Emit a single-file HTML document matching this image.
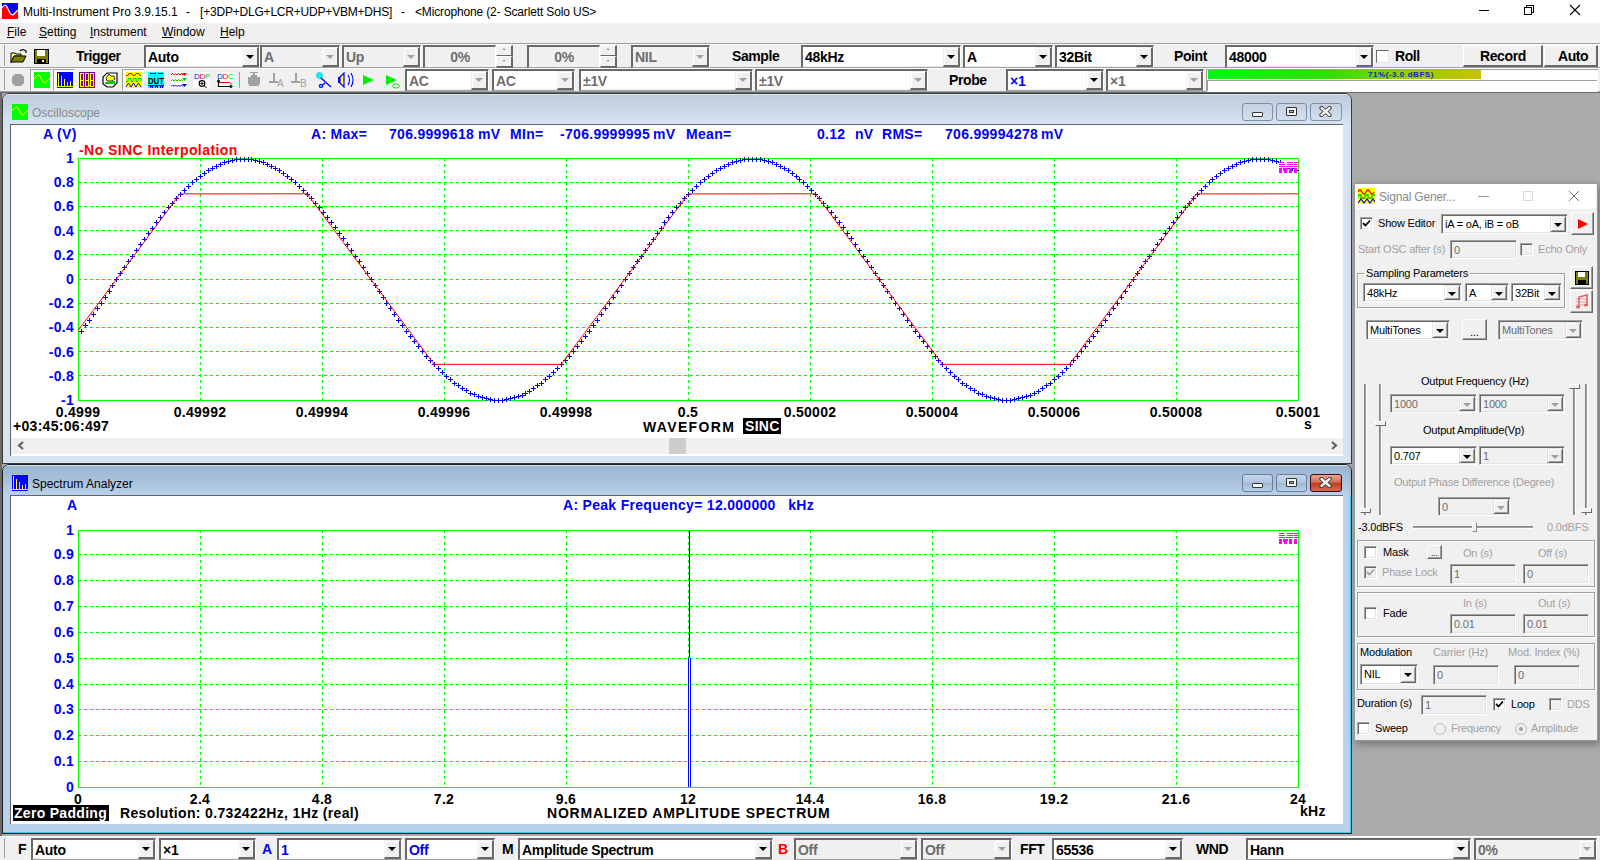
<!DOCTYPE html><html><head><meta charset="utf-8"><style>
*{margin:0;padding:0;box-sizing:border-box}
html,body{width:1600px;height:860px;overflow:hidden;background:#f0f0f0;font-family:"Liberation Sans",sans-serif;}
.a{position:absolute}
.t{position:absolute;white-space:nowrap;line-height:1}
.cb{position:absolute;background:#fff;border-top:2px solid #696969;border-left:2px solid #696969;border-right:1px solid #fff;border-bottom:1px solid #a0a0a0;box-shadow:inset -1px -1px 0 #f0f0f0}
.cb.dis{background:#f0f0f0}
.cb .v{position:absolute;left:2px;top:0;bottom:0;display:flex;align-items:center;font-weight:bold;font-size:14px;color:#000;white-space:nowrap;letter-spacing:-0.3px}
.cb.dis .v{color:#6d6d6d}
.cb .btn{position:absolute;right:0;top:0;bottom:0;width:17px;background:#f0f0f0;border-top:1px solid #f0f0f0;border-left:1px solid #f0f0f0;border-right:2px solid #696969;border-bottom:2px solid #696969;box-shadow:inset 1px 1px 0 #fff}
.cb .btn:after{content:"";position:absolute;left:50%;top:50%;margin-left:-4px;margin-top:-2px;border-left:4px solid transparent;border-right:4px solid transparent;border-top:4px solid #000}
.cb.dis .btn:after,.cb .btn.g:after{border-top-color:#a0a0a0}
.lbl{position:absolute;font-weight:bold;font-size:14px;color:#000;white-space:nowrap;line-height:1;letter-spacing:-0.4px}
.btn3d{position:absolute;background:#f0f0f0;border-top:1px solid #fff;border-left:1px solid #fff;border-right:2px solid #696969;border-bottom:2px solid #696969;}
</style></head><body>
<div class="a" style="left:0;top:0;width:1600px;height:23px;background:#fff"></div>
<svg class="a" style="left:2px;top:3px" width="16" height="16" viewBox="0 0 16 16"><rect width="16" height="16" fill="#00f"/><path d="M0 16 L0 4.5 L4 3 L8.5 11 L11 12 L16 7 L16 16Z" fill="#f00"/><path d="M0 5 Q3 0 5 4 L8 10 Q10 13 12 11 L16 7" fill="none" stroke="#fff" stroke-width="1.2"/></svg>
<div class="t" style="left:23px;top:6px;font-size:12px;color:#000">Multi-Instrument Pro 3.9.15.1</div>
<div class="t" style="left:186px;top:6px;font-size:12px;color:#000">-</div>
<div class="t" style="left:200px;top:6px;font-size:12px;color:#000;letter-spacing:-0.2px">[+3DP+DLG+LCR+UDP+VBM+DHS]</div>
<div class="t" style="left:401px;top:6px;font-size:12px;color:#000">-</div>
<div class="t" style="left:415px;top:6px;font-size:12px;color:#000;letter-spacing:-0.15px">&lt;Microphone (2- Scarlett Solo US&gt;</div>
<div class="a" style="left:1479px;top:10px;width:10px;height:1px;background:#000"></div>
<svg class="a" style="left:1524px;top:5px" width="11" height="10" shape-rendering="crispEdges"><path d="M2.5 2.5V0.5H9.5V7.5H7.5" fill="none" stroke="#000"/><rect x="0.5" y="2.5" width="7" height="7" fill="#fff" stroke="#000"/></svg>
<svg class="a" style="left:1569px;top:4px" width="12" height="12"><path d="M1 1L11 11M11 1L1 11" stroke="#000" stroke-width="1.1"/></svg>
<div class="a" style="left:0;top:23px;width:1600px;height:20px;background:#f0f0f0"></div>
<div class="t" style="left:7px;top:26px;font-size:12px;color:#000"><u>F</u>ile</div>
<div class="t" style="left:39px;top:26px;font-size:12px;color:#000"><u>S</u>etting</div>
<div class="t" style="left:90px;top:26px;font-size:12px;color:#000"><u>I</u>nstrument</div>
<div class="t" style="left:162px;top:26px;font-size:12px;color:#000"><u>W</u>indow</div>
<div class="t" style="left:220px;top:26px;font-size:12px;color:#000"><u>H</u>elp</div>
<div class="a" style="left:0;top:43px;width:1600px;height:1px;background:#a0a0a0"></div>
<div class="a" style="left:0;top:44px;width:1600px;height:1px;background:#fff"></div>
<div class="a" style="left:0;top:45px;width:1600px;height:23px;background:#f0f0f0"></div>
<div class="a" style="left:0;top:67px;width:1600px;height:1px;background:#a0a0a0"></div>
<div class="a" style="left:0;top:68px;width:1600px;height:1px;background:#fff"></div>
<div class="a" style="left:0;top:69px;width:1600px;height:22px;background:#f0f0f0"></div>
<div class="a" style="left:0;top:91px;width:1600px;height:1px;background:#a0a0a0"></div>
<div class="a" style="left:4px;top:45px;width:1px;height:21px;background:#a0a0a0"></div>
<div class="a" style="left:4px;top:69px;width:1px;height:21px;background:#a0a0a0"></div>
<svg class="a" style="left:10px;top:48px" width="18" height="16" viewBox="0 0 18 16"><path d="M1 5h4l1 1h5v2H4l-3 7z" fill="#ffff80" stroke="#000" stroke-width="1"/><path d="M1 14l3-6h12l-3 6z" fill="#808000" stroke="#000" stroke-width="1"/><path d="M10 3q3-3 6 0l0 2" fill="none" stroke="#000" stroke-width="1.2"/></svg>
<svg class="a" style="left:34px;top:49px" width="15" height="15" viewBox="0 0 15 15"><rect x="0.5" y="0.5" width="14" height="14" fill="#808000" stroke="#000"/><rect x="3" y="1" width="8" height="6" fill="#fff"/><rect x="3" y="10" width="9" height="4" fill="#000"/><rect x="8" y="11" width="2" height="2" fill="#fff"/></svg>
<div class="lbl" style="left:76px;top:49px">Trigger</div>
<div class="cb" style="left:144px;top:45px;width:116px;height:23px;"><div class="v" style="font-size:14px">Auto</div><div class="btn"></div></div>
<div class="cb dis" style="left:260px;top:45px;width:80px;height:23px;"><div class="v" style="font-size:14px">A</div><div class="btn"></div></div>
<div class="cb dis" style="left:342px;top:45px;width:79px;height:23px;"><div class="v" style="font-size:14px">Up</div><div class="btn"></div></div>
<div class="cb dis" style="left:423px;top:45px;width:73px;height:23px"><div class="v" style="left:0;right:0;justify-content:center">0%</div></div>
<div class="a" style="left:496px;top:45px;width:17px;height:11px;background:#f0f0f0;border-right:2px solid #696969;border-bottom:1px solid #696969;border-top:1px solid #fff;border-left:1px solid #fff"></div>
<div class="a" style="left:496px;top:56px;width:17px;height:12px;background:#f0f0f0;border-right:2px solid #696969;border-bottom:2px solid #696969;border-top:1px solid #fff;border-left:1px solid #fff"></div>
<div class="a" style="left:502px;top:48px;border-left:2px solid transparent;border-right:2px solid transparent;border-bottom:2px solid #a0a0a0"></div>
<div class="a" style="left:502px;top:60px;border-left:2px solid transparent;border-right:2px solid transparent;border-top:2px solid #a0a0a0"></div>
<div class="cb dis" style="left:527px;top:45px;width:73px;height:23px"><div class="v" style="left:0;right:0;justify-content:center">0%</div></div>
<div class="a" style="left:600px;top:45px;width:17px;height:11px;background:#f0f0f0;border-right:2px solid #696969;border-bottom:1px solid #696969;border-top:1px solid #fff;border-left:1px solid #fff"></div>
<div class="a" style="left:600px;top:56px;width:17px;height:12px;background:#f0f0f0;border-right:2px solid #696969;border-bottom:2px solid #696969;border-top:1px solid #fff;border-left:1px solid #fff"></div>
<div class="a" style="left:606px;top:48px;border-left:2px solid transparent;border-right:2px solid transparent;border-bottom:2px solid #a0a0a0"></div>
<div class="a" style="left:606px;top:60px;border-left:2px solid transparent;border-right:2px solid transparent;border-top:2px solid #a0a0a0"></div>
<div class="cb dis" style="left:631px;top:45px;width:79px;height:23px;"><div class="v" style="font-size:14px">NIL</div><div class="btn"></div></div>
<div class="lbl" style="left:732px;top:49px">Sample</div>
<div class="cb" style="left:801px;top:45px;width:160px;height:23px;"><div class="v" style="font-size:14px">48kHz</div><div class="btn"></div></div>
<div class="cb" style="left:963px;top:45px;width:90px;height:23px;"><div class="v" style="font-size:14px">A</div><div class="btn"></div></div>
<div class="cb" style="left:1055px;top:45px;width:99px;height:23px;"><div class="v" style="font-size:14px">32Bit</div><div class="btn"></div></div>
<div class="lbl" style="left:1174px;top:49px">Point</div>
<div class="cb" style="left:1225px;top:45px;width:149px;height:23px;"><div class="v" style="font-size:14px">48000</div><div class="btn"></div></div>
<div class="a" style="left:1376px;top:50px;width:13px;height:13px;background:#fff;border-top:1px solid #696969;border-left:1px solid #696969;border-right:1px solid #e3e3e3;border-bottom:1px solid #e3e3e3"></div>
<div class="lbl" style="left:1395px;top:49px">Roll</div>
<div class="btn3d" style="left:1463px;top:45px;width:80px;height:22px"></div>
<div class="lbl" style="left:1480px;top:49px">Record</div>
<div class="btn3d" style="left:1544px;top:45px;width:54px;height:22px"></div>
<div class="lbl" style="left:1558px;top:49px">Auto</div>

<svg class="a" style="left:11px;top:73px" width="14" height="14"><path d="M4 1h6l3 3v6l-3 3H4l-3-3V4z" fill="#a0a0a0"/></svg>
<div class="a" style="left:30px;top:69px;width:22px;height:22px;border-top:1px solid #a0a0a0;border-left:1px solid #a0a0a0;border-right:1px solid #fff;border-bottom:1px solid #fff;background:#f8f8f8"></div>
<svg class="a" style="left:34px;top:72px" width="16" height="16"><rect width="16" height="16" fill="#0f0"/><path d="M0 7 L4 3 L5 3 L10 11 L11 11 L16 6" fill="none" stroke="#ff0" stroke-width="1"/></svg>
<div class="a" style="left:53px;top:69px;width:22px;height:22px;border-top:1px solid #a0a0a0;border-left:1px solid #a0a0a0;border-right:1px solid #fff;border-bottom:1px solid #fff;background:#f8f8f8"></div>
<svg class="a" style="left:57px;top:72px" width="16" height="16" shape-rendering="crispEdges"><rect width="16" height="16" fill="#00f"/><path d="M1.5 1v14M4.5 4v11M7.5 7v8M10.5 10v5M13.5 9v6M0 14.5h16" stroke="#ff0" stroke-width="1"/></svg>
<svg class="a" style="left:79px;top:72px" width="16" height="16" shape-rendering="crispEdges"><rect width="16" height="16" fill="#800080"/><path d="M1.5 1.5h3v13h-3zM1.5 8h3M6.5 1.5h3v13h-3zM6.5 8h3M11.5 1.5h3v13h-3zM11.5 8h3" fill="none" stroke="#ff0" stroke-width="1"/><rect x="10" y="13" width="1" height="1" fill="#ff0"/></svg>
<svg class="a" style="left:102px;top:72px" width="16" height="16"><rect width="16" height="16" fill="#fff"/><path d="M1 12V5l4-4h10v10l-4 4H5z" fill="#fff" stroke="#000" stroke-width="1.2"/><path d="M4 6l3-4 2 2 3 0 1 3-3 2H5z" fill="#ff0" stroke="#000" stroke-width=".8"/><path d="M3 10h4l2-1h4v3H3z" fill="#0c0"/></svg>
<div class="a" style="left:122px;top:69px;width:22px;height:22px;border-top:1px solid #a0a0a0;border-left:1px solid #a0a0a0;border-right:1px solid #fff;border-bottom:1px solid #fff;background:#f8f8f8"></div>
<svg class="a" style="left:126px;top:72px" width="16" height="16"><rect width="16" height="16" fill="#ff0"/><path d="M0 3.5h2l1-2h3l1 2h2l1-2h3l1 2h1" fill="none" stroke="#f00"/><path d="M0 9.5h2v-3h3v3h2v-3h3v3h2v-3h3v3" fill="none" stroke="#0c0"/><path d="M0 15l2.5-4 2.5 4 2.5-4 2.5 4 2.5-4 2.5 4" fill="none" stroke="#00f"/></svg>
<svg class="a" style="left:148px;top:72px" width="16" height="16" shape-rendering="crispEdges"><rect width="16" height="16" fill="#0ff"/><text x="0" y="12" font-family="Liberation Sans" font-weight="bold" font-size="9" fill="#000" textLength="16" lengthAdjust="spacingAndGlyphs">DUT</text><path d="M2 1.5h6M10 1.5h5M0 13.5h16" stroke="#00f"/><path d="M2 14h2v2H2zM7 14h2v2H7zM12 14h2v2h-2z" fill="none" stroke="#00f"/></svg>
<svg class="a" style="left:171px;top:72px" width="16" height="16"><rect width="16" height="16" fill="#fff"/><path d="M0 3l1.5 -1.5 1.5 1.5 1.5-1.5 1.5 1.5 1.5-1.5 1.5 1.5 1.5-1.5 1.5 1.5" fill="none" stroke="#f00"/><path d="M11 1h5l-2.5 3z" fill="#f00"/><path d="M0 9l1.5 -1.5 1.5 1.5 1.5-1.5 1.5 1.5 1.5-1.5 1.5 1.5 1.5-1.5 1.5 1.5" fill="none" stroke="#0c0"/><path d="M11 6h5l-2.5 3z" fill="#0c0"/><path d="M0 14.5l1.5 -1.5 1.5 1.5 1.5-1.5 1.5 1.5 1.5-1.5 1.5 1.5 1.5-1.5 1.5 1.5" fill="none" stroke="#00f"/><path d="M11 12h5l-2.5 3z" fill="#00f"/></svg>
<svg class="a" style="left:194px;top:72px" width="16" height="16"><rect width="16" height="16" fill="#fff"/><text x="0" y="7" font-family="Liberation Sans" font-size="8" fill="#00f">D</text><text x="5.5" y="7" font-family="Liberation Sans" font-size="8" fill="#f00">D</text><text x="11" y="7" font-family="Liberation Sans" font-size="8" fill="#0c0">P</text><circle cx="8" cy="11.5" r="2.8" fill="none" stroke="#000" stroke-width="1.2"/><path d="M10 13.5l2.5 2.5M6.5 11.5h3M8 10v3" stroke="#000"/></svg>
<svg class="a" style="left:217px;top:72px" width="16" height="16"><rect width="16" height="16" fill="#fff"/><text x="0" y="7" font-family="Liberation Sans" font-size="8" fill="#00f">D</text><text x="5.5" y="7" font-family="Liberation Sans" font-size="8" fill="#f00">D</text><text x="11" y="7" font-family="Liberation Sans" font-size="8" fill="#0c0">C</text><path d="M2 10.5h11l2 2" fill="none" stroke="#f00"/><path d="M1.5 9v5.5h13M0 10l1.5-2 1.5 2M13 13l2 1.5-2 1.5" fill="none" stroke="#000" stroke-width="1.2"/></svg>
<div class="a" style="left:239px;top:72px;width:1px;height:16px;background:#a0a0a0"></div>
<svg class="a" style="left:247px;top:72px" width="14" height="16" shape-rendering="crispEdges"><path d="M3 0h8v1H3zM6 1h2v2H6zM4 3h6v2H4zM1 5h12v7H1zM2 12h10v2H2z" fill="#a0a0a0"/></svg>
<svg class="a" style="left:269px;top:73px" width="17" height="15" shape-rendering="crispEdges"><path d="M4 0h2v8H4zM0 8h9v2H0z" fill="#a0a0a0"/><text x="8" y="14" font-family="Liberation Sans" font-size="10" fill="#a0a0a0">A</text></svg>
<svg class="a" style="left:291px;top:73px" width="17" height="15" shape-rendering="crispEdges"><path d="M4 0h2v8H4zM0 8h9v2H0z" fill="#a0a0a0"/><text x="9" y="14" font-family="Liberation Sans" font-size="10" fill="#a0a0a0">B</text></svg>
<svg class="a" style="left:316px;top:72px" width="16" height="16"><circle cx="3.5" cy="3.5" r="3" fill="#0ff" stroke="#0aa" stroke-width=".6"/><path d="M5 6l10 9M5 14l4-3" stroke="#00f" stroke-width="1.3" fill="none"/><circle cx="5" cy="14" r="1.8" fill="#0cf" stroke="#00f"/></svg>
<svg class="a" style="left:338px;top:72px" width="17" height="16"><rect x="0" y="5" width="2" height="6" fill="#00f"/><path d="M2 5l4-4v14l-4-4z" fill="#ff0" stroke="#00f" stroke-width="1.2"/><path d="M10 3q3 5 0 10M13 1q4 7 0 14" fill="none" stroke="#00f" stroke-width="1.1"/></svg>
<svg class="a" style="left:363px;top:75px" width="12" height="10"><path d="M0 0l11 5-11 5z" fill="#0e0"/></svg>
<svg class="a" style="left:386px;top:75px" width="15" height="14"><path d="M0 0l11 5-11 5z" fill="#0e0"/><ellipse cx="10" cy="11" rx="3.5" ry="2" fill="none" stroke="#0e0"/></svg>

<div class="cb" style="left:405px;top:69px;width:84px;height:22px;background:#fff;"><div class="v" style="color:#6d6d6d;font-size:14px">AC</div><div class="btn g"></div></div>
<div class="cb" style="left:492px;top:69px;width:83px;height:22px;background:#fff;"><div class="v" style="color:#6d6d6d;font-size:14px">AC</div><div class="btn g"></div></div>
<div class="cb" style="left:579px;top:69px;width:174px;height:22px;background:#fff;"><div class="v" style="color:#6d6d6d;font-size:14px">&plusmn;1V</div><div class="btn g"></div></div>
<div class="cb" style="left:755px;top:69px;width:173px;height:22px;background:#fff;"><div class="v" style="color:#6d6d6d;font-size:14px">&plusmn;1V</div><div class="btn g"></div></div>
<div class="lbl" style="left:949px;top:73px">Probe</div>
<div class="cb" style="left:1006px;top:69px;width:98px;height:22px;"><div class="v" style="color:#0000ff;font-size:14px">&times;1</div><div class="btn"></div></div>
<div class="cb" style="left:1106px;top:69px;width:98px;height:22px;background:#fff;"><div class="v" style="color:#6d6d6d;font-size:14px">&times;1</div><div class="btn g"></div></div>
<div class="a" style="left:1206px;top:69px;width:392px;height:23px;background:#fff;border-top:1px solid #a0a0a0;border-left:1px solid #a0a0a0"></div>
<div class="a" style="left:1208px;top:70px;width:273px;height:9px;background:linear-gradient(90deg,#00f810,#30e000 45%,#8cd000 70%,#c8c000)"></div>
<div class="t" style="left:1368px;top:71px;font-size:8px;font-weight:bold;color:#2020c0;letter-spacing:0.55px">71%(-3.0 dBFS)</div>
<div class="a" style="left:1207px;top:80px;width:390px;height:1px;background:#a0a0a0"></div>
<div class="a" style="left:1207px;top:81px;width:1px;height:10px;background:#a0a0a0"></div>
<div class="a" style="left:0;top:92px;width:1600px;height:744px;background:#ababab;border-top:1px solid #696969;border-left:2px solid #696969"></div>
<div class="a" style="left:2px;top:93px;width:1350px;height:371px;background:#d7e4f2;border:1px solid #3a3a3a;border-radius:7px 7px 0 0;overflow:hidden;"><div class="a" style="left:0;top:0;right:0;height:31px;background:linear-gradient(#bccadb,#d7e4f2);box-shadow:inset 0 1px 0 rgba(255,255,255,.6)"></div></div>
<svg class="a" style="left:12px;top:104px" width="16" height="16"><rect width="16" height="16" fill="#0f0"/><path d="M0 7 L4 3 L5 3 L10 11 L11 11 L16 6" fill="none" stroke="#ff0" stroke-width="1"/></svg>
<div class="t" style="left:32px;top:107px;font-size:12px;color:#8a8a8a">Oscilloscope</div>
<div class="a" style="left:1242px;top:103px;width:31px;height:18px;border:1px solid #7f8ea8;border-radius:3px;background:linear-gradient(#c4d1e1,#d3dfed)"></div>
<div class="a" style="left:1276px;top:103px;width:31px;height:18px;border:1px solid #7f8ea8;border-radius:3px;background:linear-gradient(#c4d1e1,#d3dfed)"></div>
<div class="a" style="left:1310px;top:103px;width:32px;height:18px;border:1px solid #7f8ea8;border-radius:3px;background:linear-gradient(#c4d1e1,#d3dfed)"></div>
<div class="a" style="left:1252px;top:112px;width:11px;height:5px;background:#fff;border:1px solid #333;border-radius:1px"></div>
<div class="a" style="left:1286px;top:107px;width:11px;height:9px;background:#f4f4f4;border:1px solid #333;border-radius:1px"><div class="a" style="left:2px;top:2px;width:5px;height:3px;border:1px solid #333;background:#9fb7d5"></div></div>
<svg class="a" style="left:1319px;top:106px" width="13" height="11" viewBox="0 0 13 11"><path d="M2.5 2L10.5 9M10.5 2L2.5 9" stroke="#333" stroke-width="4.2" stroke-linecap="round"/><path d="M2.5 2L10.5 9M10.5 2L2.5 9" stroke="#f4f4f4" stroke-width="2.4" stroke-linecap="round"/></svg>
<div class="a" style="left:10px;top:124px;width:1333px;height:332px;background:#fff;border-top:1px solid #646464;border-left:1px solid #646464"></div>
<div class="a" style="left:11px;top:438px;width:1332px;height:17px;background:#f0f0f0;border-bottom:1px solid #fff"></div>
<div class="a" style="left:669px;top:438px;width:17px;height:16px;background:#cdcdcd"></div>
<svg class="a" style="left:17px;top:441px" width="8" height="9"><path d="M6 1L2 4.5L6 8" fill="none" stroke="#606060" stroke-width="2.2"/></svg>
<svg class="a" style="left:1330px;top:441px" width="8" height="9"><path d="M2 1L6 4.5L2 8" fill="none" stroke="#606060" stroke-width="2.2"/></svg>
<div class="a" style="left:2px;top:464px;width:1350px;height:370px;background:#b9d1ea;border:1px solid #1c1c1c;border-radius:7px 7px 0 0;overflow:hidden;box-shadow:inset -1px -1px 0 #40c8f0;"><div class="a" style="left:0;top:0;right:0;height:31px;background:linear-gradient(#99b2ce,#b9d1ea);box-shadow:inset 0 1px 0 rgba(255,255,255,.6)"></div></div>
<svg class="a" style="left:12px;top:475px" width="16" height="16" shape-rendering="crispEdges"><rect width="16" height="16" fill="#00f"/><path d="M1.5 1v14M4.5 4v11M7.5 7v8M10.5 10v5M13.5 9v6M0 14.5h16" stroke="#ff0" stroke-width="1"/></svg>
<div class="t" style="left:32px;top:478px;font-size:12px;color:#000">Spectrum Analyzer</div>
<div class="a" style="left:1242px;top:474px;width:31px;height:18px;border:1px solid #6a7b98;border-radius:3px;background:linear-gradient(#c6d6ea,#aec4df 50%,#9fb7d5 51%,#bcd0e8)"></div>
<div class="a" style="left:1276px;top:474px;width:31px;height:18px;border:1px solid #6a7b98;border-radius:3px;background:linear-gradient(#c6d6ea,#aec4df 50%,#9fb7d5 51%,#bcd0e8)"></div>
<div class="a" style="left:1310px;top:474px;width:32px;height:18px;border:1px solid #3c0b0b;border-radius:3px;background:linear-gradient(#e8a493,#d26f5a 45%,#bc3c1f 50%,#d66c55)"></div>
<div class="a" style="left:1252px;top:483px;width:11px;height:5px;background:#fff;border:1px solid #333;border-radius:1px"></div>
<div class="a" style="left:1286px;top:478px;width:11px;height:9px;background:#f4f4f4;border:1px solid #333;border-radius:1px"><div class="a" style="left:2px;top:2px;width:5px;height:3px;border:1px solid #333;background:#9fb7d5"></div></div>
<svg class="a" style="left:1319px;top:477px" width="13" height="11" viewBox="0 0 13 11"><path d="M2.5 2L10.5 9M10.5 2L2.5 9" stroke="#333" stroke-width="4.2" stroke-linecap="round"/><path d="M2.5 2L10.5 9M10.5 2L2.5 9" stroke="#f4f4f4" stroke-width="2.4" stroke-linecap="round"/></svg>
<div class="a" style="left:10px;top:495px;width:1333px;height:329px;background:#fff;border-top:1px solid #646464;border-left:1px solid #646464"></div>
<svg class="a" style="left:0;top:0" width="1600" height="860" shape-rendering="crispEdges"><line x1="200.5" y1="158" x2="200.5" y2="400" stroke="#00ff00" stroke-dasharray="3 3"/><line x1="322.5" y1="158" x2="322.5" y2="400" stroke="#00ff00" stroke-dasharray="3 3"/><line x1="444.5" y1="158" x2="444.5" y2="400" stroke="#00ff00" stroke-dasharray="3 3"/><line x1="566.5" y1="158" x2="566.5" y2="400" stroke="#00ff00" stroke-dasharray="3 3"/><line x1="688.5" y1="158" x2="688.5" y2="400" stroke="#00ff00" stroke-dasharray="3 3"/><line x1="810.5" y1="158" x2="810.5" y2="400" stroke="#00ff00" stroke-dasharray="3 3"/><line x1="932.5" y1="158" x2="932.5" y2="400" stroke="#00ff00" stroke-dasharray="3 3"/><line x1="1054.5" y1="158" x2="1054.5" y2="400" stroke="#00ff00" stroke-dasharray="3 3"/><line x1="1176.5" y1="158" x2="1176.5" y2="400" stroke="#00ff00" stroke-dasharray="3 3"/><line x1="78" y1="182.5" x2="1298" y2="182.5" stroke="#00ff00" stroke-dasharray="3 3"/><line x1="78" y1="206.5" x2="1298" y2="206.5" stroke="#00ff00" stroke-dasharray="3 3"/><line x1="78" y1="230.5" x2="1298" y2="230.5" stroke="#00ff00" stroke-dasharray="3 3"/><line x1="78" y1="254.5" x2="1298" y2="254.5" stroke="#00ff00" stroke-dasharray="3 3"/><line x1="78" y1="279.5" x2="1298" y2="279.5" stroke="#00ff00" stroke-dasharray="3 3"/><line x1="78" y1="303.5" x2="1298" y2="303.5" stroke="#00ff00" stroke-dasharray="3 3"/><line x1="78" y1="327.5" x2="1298" y2="327.5" stroke="#00ff00" stroke-dasharray="3 3"/><line x1="78" y1="351.5" x2="1298" y2="351.5" stroke="#00ff00" stroke-dasharray="3 3"/><line x1="78" y1="375.5" x2="1298" y2="375.5" stroke="#00ff00" stroke-dasharray="3 3"/><rect x="78.5" y="158.5" width="1220" height="242" fill="none" stroke="#00ff00"/><path d="M79 331.5h5M81.5 329v5M83 325.5h5M85.5 323v5M87 320.5h5M89.5 318v5M91 314.5h5M93.5 312v5M95 308.5h5M97.5 306v5M99 303.5h5M101.5 301v5M103 297.5h5M105.5 295v5M107 291.5h5M109.5 289v5M110 285.5h5M112.5 283v5M114 279.5h5M116.5 277v5M118 273.5h5M120.5 271v5M122 267.5h5M124.5 265v5M126 261.5h5M128.5 259v5M130 256.5h5M132.5 254v5M134 250.5h5M136.5 248v5M138 244.5h5M140.5 242v5M142 239.5h5M144.5 237v5M146 233.5h5M148.5 231v5M150 228.5h5M152.5 226v5M154 222.5h5M156.5 220v5M158 217.5h5M160.5 215v5M162 212.5h5M164.5 210v5M166 207.5h5M168.5 205v5M170 203.5h5M172.5 201v5M174 198.5h5M176.5 196v5M178 194.5h5M180.5 192v5M182 190.5h5M184.5 188v5M186 186.5h5M188.5 184v5M190 182.5h5M192.5 180v5M194 179.5h5M196.5 177v5M198 176.5h5M200.5 174v5M202 173.5h5M204.5 171v5M206 170.5h5M208.5 168v5M210 168.5h5M212.5 166v5M214 166.5h5M216.5 164v5M218 164.5h5M220.5 162v5M222 162.5h5M224.5 160v5M226 161.5h5M228.5 159v5M230 160.5h5M232.5 158v5M234 159.5h5M236.5 157v5M238 159.5h5M240.5 157v5M242 159.5h5M244.5 157v5M246 159.5h5M248.5 157v5M249 159.5h5M251.5 157v5M253 160.5h5M255.5 158v5M257 161.5h5M259.5 159v5M261 162.5h5M263.5 160v5M265 164.5h5M267.5 162v5M269 166.5h5M271.5 164v5M273 168.5h5M275.5 166v5M277 170.5h5M279.5 168v5M281 173.5h5M283.5 171v5M285 176.5h5M287.5 174v5M289 179.5h5M291.5 177v5M293 182.5h5M295.5 180v5M297 186.5h5M299.5 184v5M301 190.5h5M303.5 188v5M305 194.5h5M307.5 192v5M309 198.5h5M311.5 196v5M313 203.5h5M315.5 201v5M317 207.5h5M319.5 205v5M321 212.5h5M323.5 210v5M325 217.5h5M327.5 215v5M329 222.5h5M331.5 220v5M333 227.5h5M335.5 225v5M337 233.5h5M339.5 231v5M341 238.5h5M343.5 236v5M345 244.5h5M347.5 242v5M349 250.5h5M351.5 248v5M353 256.5h5M355.5 254v5M357 261.5h5M359.5 259v5M361 267.5h5M363.5 265v5M365 273.5h5M367.5 271v5M369 279.5h5M371.5 277v5M373 285.5h5M375.5 283v5M377 291.5h5M379.5 289v5M381 297.5h5M383.5 295v5M384 303.5h5M386.5 301v5M388 308.5h5M390.5 306v5M392 314.5h5M394.5 312v5M396 320.5h5M398.5 318v5M400 325.5h5M402.5 323v5M404 331.5h5M406.5 329v5M408 336.5h5M410.5 334v5M412 341.5h5M414.5 339v5M416 346.5h5M418.5 344v5M420 351.5h5M422.5 349v5M424 356.5h5M426.5 354v5M428 360.5h5M430.5 358v5M432 364.5h5M434.5 362v5M436 368.5h5M438.5 366v5M440 372.5h5M442.5 370v5M444 376.5h5M446.5 374v5M448 379.5h5M450.5 377v5M452 383.5h5M454.5 381v5M456 385.5h5M458.5 383v5M460 388.5h5M462.5 386v5M464 390.5h5M466.5 388v5M468 393.5h5M470.5 391v5M472 394.5h5M474.5 392v5M476 396.5h5M478.5 394v5M480 397.5h5M482.5 395v5M484 398.5h5M486.5 396v5M488 399.5h5M490.5 397v5M492 400.5h5M494.5 398v5M496 400.5h5M498.5 398v5M500 400.5h5M502.5 398v5M504 399.5h5M506.5 397v5M508 398.5h5M510.5 396v5M512 397.5h5M514.5 395v5M516 396.5h5M518.5 394v5M520 395.5h5M522.5 393v5M523 393.5h5M525.5 391v5M527 391.5h5M529.5 389v5M531 388.5h5M533.5 386v5M535 385.5h5M537.5 383v5M539 383.5h5M541.5 381v5M543 379.5h5M545.5 377v5M547 376.5h5M549.5 374v5M551 372.5h5M553.5 370v5M555 368.5h5M557.5 366v5M559 364.5h5M561.5 362v5M563 360.5h5M565.5 358v5M567 356.5h5M569.5 354v5M571 351.5h5M573.5 349v5M575 346.5h5M577.5 344v5M579 341.5h5M581.5 339v5M583 336.5h5M585.5 334v5M587 331.5h5M589.5 329v5M591 325.5h5M593.5 323v5M595 320.5h5M597.5 318v5M599 314.5h5M601.5 312v5M603 308.5h5M605.5 306v5M607 303.5h5M609.5 301v5M611 297.5h5M613.5 295v5M615 291.5h5M617.5 289v5M619 285.5h5M621.5 283v5M623 279.5h5M625.5 277v5M627 273.5h5M629.5 271v5M631 267.5h5M633.5 265v5M635 261.5h5M637.5 259v5M639 256.5h5M641.5 254v5M643 250.5h5M645.5 248v5M647 244.5h5M649.5 242v5M651 239.5h5M653.5 237v5M655 233.5h5M657.5 231v5M659 228.5h5M661.5 226v5M662 222.5h5M664.5 220v5M666 217.5h5M668.5 215v5M670 212.5h5M672.5 210v5M674 207.5h5M676.5 205v5M678 203.5h5M680.5 201v5M682 198.5h5M684.5 196v5M686 194.5h5M688.5 192v5M690 190.5h5M692.5 188v5M694 186.5h5M696.5 184v5M698 182.5h5M700.5 180v5M702 179.5h5M704.5 177v5M706 176.5h5M708.5 174v5M710 173.5h5M712.5 171v5M714 170.5h5M716.5 168v5M718 168.5h5M720.5 166v5M722 166.5h5M724.5 164v5M726 164.5h5M728.5 162v5M730 162.5h5M732.5 160v5M734 161.5h5M736.5 159v5M738 160.5h5M740.5 158v5M742 159.5h5M744.5 157v5M746 159.5h5M748.5 157v5M750 159.5h5M752.5 157v5M754 159.5h5M756.5 157v5M758 159.5h5M760.5 157v5M762 160.5h5M764.5 158v5M766 161.5h5M768.5 159v5M770 162.5h5M772.5 160v5M774 164.5h5M776.5 162v5M778 166.5h5M780.5 164v5M782 168.5h5M784.5 166v5M786 170.5h5M788.5 168v5M790 173.5h5M792.5 171v5M794 176.5h5M796.5 174v5M797 179.5h5M799.5 177v5M801 182.5h5M803.5 180v5M805 186.5h5M807.5 184v5M809 190.5h5M811.5 188v5M813 194.5h5M815.5 192v5M817 198.5h5M819.5 196v5M821 203.5h5M823.5 201v5M825 207.5h5M827.5 205v5M829 212.5h5M831.5 210v5M833 217.5h5M835.5 215v5M837 222.5h5M839.5 220v5M841 227.5h5M843.5 225v5M845 233.5h5M847.5 231v5M849 238.5h5M851.5 236v5M853 244.5h5M855.5 242v5M857 250.5h5M859.5 248v5M861 256.5h5M863.5 254v5M865 261.5h5M867.5 259v5M869 267.5h5M871.5 265v5M873 273.5h5M875.5 271v5M877 279.5h5M879.5 277v5M881 285.5h5M883.5 283v5M885 291.5h5M887.5 289v5M889 297.5h5M891.5 295v5M893 303.5h5M895.5 301v5M897 308.5h5M899.5 306v5M901 314.5h5M903.5 312v5M905 320.5h5M907.5 318v5M909 325.5h5M911.5 323v5M913 331.5h5M915.5 329v5M917 336.5h5M919.5 334v5M921 341.5h5M923.5 339v5M925 346.5h5M927.5 344v5M929 351.5h5M931.5 349v5M933 356.5h5M935.5 354v5M936 360.5h5M938.5 358v5M940 364.5h5M942.5 362v5M944 368.5h5M946.5 366v5M948 372.5h5M950.5 370v5M952 376.5h5M954.5 374v5M956 379.5h5M958.5 377v5M960 383.5h5M962.5 381v5M964 385.5h5M966.5 383v5M968 388.5h5M970.5 386v5M972 390.5h5M974.5 388v5M976 393.5h5M978.5 391v5M980 394.5h5M982.5 392v5M984 396.5h5M986.5 394v5M988 397.5h5M990.5 395v5M992 398.5h5M994.5 396v5M996 399.5h5M998.5 397v5M1000 400.5h5M1002.5 398v5M1004 400.5h5M1006.5 398v5M1008 400.5h5M1010.5 398v5M1012 399.5h5M1014.5 397v5M1016 398.5h5M1018.5 396v5M1020 397.5h5M1022.5 395v5M1024 396.5h5M1026.5 394v5M1028 395.5h5M1030.5 393v5M1032 393.5h5M1034.5 391v5M1036 391.5h5M1038.5 389v5M1040 388.5h5M1042.5 386v5M1044 385.5h5M1046.5 383v5M1048 383.5h5M1050.5 381v5M1052 379.5h5M1054.5 377v5M1056 376.5h5M1058.5 374v5M1060 372.5h5M1062.5 370v5M1064 368.5h5M1066.5 366v5M1068 364.5h5M1070.5 362v5M1071 360.5h5M1073.5 358v5M1075 356.5h5M1077.5 354v5M1079 351.5h5M1081.5 349v5M1083 346.5h5M1085.5 344v5M1087 341.5h5M1089.5 339v5M1091 336.5h5M1093.5 334v5M1095 331.5h5M1097.5 329v5M1099 325.5h5M1101.5 323v5M1103 320.5h5M1105.5 318v5M1107 314.5h5M1109.5 312v5M1111 308.5h5M1113.5 306v5M1115 303.5h5M1117.5 301v5M1119 297.5h5M1121.5 295v5M1123 291.5h5M1125.5 289v5M1127 285.5h5M1129.5 283v5M1131 279.5h5M1133.5 277v5M1135 273.5h5M1137.5 271v5M1139 267.5h5M1141.5 265v5M1143 261.5h5M1145.5 259v5M1147 256.5h5M1149.5 254v5M1151 250.5h5M1153.5 248v5M1155 244.5h5M1157.5 242v5M1159 239.5h5M1161.5 237v5M1163 233.5h5M1165.5 231v5M1167 228.5h5M1169.5 226v5M1171 222.5h5M1173.5 220v5M1175 217.5h5M1177.5 215v5M1179 212.5h5M1181.5 210v5M1183 207.5h5M1185.5 205v5M1187 203.5h5M1189.5 201v5M1191 198.5h5M1193.5 196v5M1195 194.5h5M1197.5 192v5M1199 190.5h5M1201.5 188v5M1203 186.5h5M1205.5 184v5M1207 182.5h5M1209.5 180v5M1210 179.5h5M1212.5 177v5M1214 176.5h5M1216.5 174v5M1218 173.5h5M1220.5 171v5M1222 170.5h5M1224.5 168v5M1226 168.5h5M1228.5 166v5M1230 166.5h5M1232.5 164v5M1234 164.5h5M1236.5 162v5M1238 162.5h5M1240.5 160v5M1242 161.5h5M1244.5 159v5M1246 160.5h5M1248.5 158v5M1250 159.5h5M1252.5 157v5M1254 159.5h5M1256.5 157v5M1258 159.5h5M1260.5 157v5M1262 159.5h5M1264.5 157v5M1266 159.5h5M1268.5 157v5M1270 160.5h5M1272.5 158v5M1274 161.5h5M1276.5 159v5M1278 162.5h5M1280.5 160v5M1282 164.5h5M1284.5 162v5M1286 166.5h5M1288.5 164v5M1290 168.5h5M1292.5 166v5M1294 170.5h5M1296.5 168v5" stroke="#0000ff" stroke-width="1" fill="none"/><clipPath id="oc"><rect x="78" y="150" width="1221" height="260"/></clipPath><polyline clip-path="url(#oc)" points="-74.2,364.3 52.9,364.4 180.0,193.9 307.1,193.8 434.1,364.3 561.2,364.4 688.3,193.9 815.4,193.8 942.5,364.3 1069.5,364.4 1196.6,193.9 1323.7,193.8" fill="none" stroke="#ff0000" stroke-width="1" shape-rendering="auto"/></svg>
<div style="position:absolute;white-space:nowrap;line-height:1;font-weight:bold;font-size:14px;letter-spacing:0.3px;color:#0000ff;right:1526px;top:151px;text-align:right">1</div>
<div style="position:absolute;white-space:nowrap;line-height:1;font-weight:bold;font-size:14px;letter-spacing:0.3px;color:#0000ff;right:1526px;top:175px;text-align:right">0.8</div>
<div style="position:absolute;white-space:nowrap;line-height:1;font-weight:bold;font-size:14px;letter-spacing:0.3px;color:#0000ff;right:1526px;top:199px;text-align:right">0.6</div>
<div style="position:absolute;white-space:nowrap;line-height:1;font-weight:bold;font-size:14px;letter-spacing:0.3px;color:#0000ff;right:1526px;top:224px;text-align:right">0.4</div>
<div style="position:absolute;white-space:nowrap;line-height:1;font-weight:bold;font-size:14px;letter-spacing:0.3px;color:#0000ff;right:1526px;top:248px;text-align:right">0.2</div>
<div style="position:absolute;white-space:nowrap;line-height:1;font-weight:bold;font-size:14px;letter-spacing:0.3px;color:#0000ff;right:1526px;top:272px;text-align:right">0</div>
<div style="position:absolute;white-space:nowrap;line-height:1;font-weight:bold;font-size:14px;letter-spacing:0.3px;color:#0000ff;right:1526px;top:296px;text-align:right">-0.2</div>
<div style="position:absolute;white-space:nowrap;line-height:1;font-weight:bold;font-size:14px;letter-spacing:0.3px;color:#0000ff;right:1526px;top:320px;text-align:right">-0.4</div>
<div style="position:absolute;white-space:nowrap;line-height:1;font-weight:bold;font-size:14px;letter-spacing:0.3px;color:#0000ff;right:1526px;top:345px;text-align:right">-0.6</div>
<div style="position:absolute;white-space:nowrap;line-height:1;font-weight:bold;font-size:14px;letter-spacing:0.3px;color:#0000ff;right:1526px;top:369px;text-align:right">-0.8</div>
<div style="position:absolute;white-space:nowrap;line-height:1;font-weight:bold;font-size:14px;letter-spacing:0.3px;color:#0000ff;right:1526px;top:393px;text-align:right">-1</div>
<div style="position:absolute;white-space:nowrap;line-height:1;font-weight:bold;font-size:14px;letter-spacing:0.3px;color:#000;left:18px;width:120px;top:405px;text-align:center">0.4999</div>
<div style="position:absolute;white-space:nowrap;line-height:1;font-weight:bold;font-size:14px;letter-spacing:0.3px;color:#000;left:140px;width:120px;top:405px;text-align:center">0.49992</div>
<div style="position:absolute;white-space:nowrap;line-height:1;font-weight:bold;font-size:14px;letter-spacing:0.3px;color:#000;left:262px;width:120px;top:405px;text-align:center">0.49994</div>
<div style="position:absolute;white-space:nowrap;line-height:1;font-weight:bold;font-size:14px;letter-spacing:0.3px;color:#000;left:384px;width:120px;top:405px;text-align:center">0.49996</div>
<div style="position:absolute;white-space:nowrap;line-height:1;font-weight:bold;font-size:14px;letter-spacing:0.3px;color:#000;left:506px;width:120px;top:405px;text-align:center">0.49998</div>
<div style="position:absolute;white-space:nowrap;line-height:1;font-weight:bold;font-size:14px;letter-spacing:0.3px;color:#000;left:628px;width:120px;top:405px;text-align:center">0.5</div>
<div style="position:absolute;white-space:nowrap;line-height:1;font-weight:bold;font-size:14px;letter-spacing:0.3px;color:#000;left:750px;width:120px;top:405px;text-align:center">0.50002</div>
<div style="position:absolute;white-space:nowrap;line-height:1;font-weight:bold;font-size:14px;letter-spacing:0.3px;color:#000;left:872px;width:120px;top:405px;text-align:center">0.50004</div>
<div style="position:absolute;white-space:nowrap;line-height:1;font-weight:bold;font-size:14px;letter-spacing:0.3px;color:#000;left:994px;width:120px;top:405px;text-align:center">0.50006</div>
<div style="position:absolute;white-space:nowrap;line-height:1;font-weight:bold;font-size:14px;letter-spacing:0.3px;color:#000;left:1116px;width:120px;top:405px;text-align:center">0.50008</div>
<div style="position:absolute;white-space:nowrap;line-height:1;font-weight:bold;font-size:14px;letter-spacing:0.3px;color:#000;left:1238px;width:120px;top:405px;text-align:center">0.5001</div>
<div style="position:absolute;white-space:nowrap;line-height:1;font-weight:bold;font-size:14px;letter-spacing:0.3px;color:#0000ff;left:43px;top:127px;font-size:14px;">A (V)</div>
<div style="position:absolute;white-space:nowrap;line-height:1;font-weight:bold;font-size:14px;letter-spacing:0.3px;color:#0000ff;left:311px;top:127px;font-size:14px;">A: Max=</div>
<div style="position:absolute;white-space:nowrap;line-height:1;font-weight:bold;font-size:14px;letter-spacing:0.3px;color:#0000ff;left:389px;top:127px;font-size:14px;">706.9999618</div>
<div style="position:absolute;white-space:nowrap;line-height:1;font-weight:bold;font-size:14px;letter-spacing:0.3px;color:#0000ff;left:478px;top:127px;font-size:14px;">mV</div>
<div style="position:absolute;white-space:nowrap;line-height:1;font-weight:bold;font-size:14px;letter-spacing:0.3px;color:#0000ff;left:510px;top:127px;font-size:14px;">MIn=</div>
<div style="position:absolute;white-space:nowrap;line-height:1;font-weight:bold;font-size:14px;letter-spacing:0.3px;color:#0000ff;left:560px;top:127px;font-size:14px;">-706.9999995</div>
<div style="position:absolute;white-space:nowrap;line-height:1;font-weight:bold;font-size:14px;letter-spacing:0.3px;color:#0000ff;left:653px;top:127px;font-size:14px;">mV</div>
<div style="position:absolute;white-space:nowrap;line-height:1;font-weight:bold;font-size:14px;letter-spacing:0.3px;color:#0000ff;left:686px;top:127px;font-size:14px;">Mean=</div>
<div style="position:absolute;white-space:nowrap;line-height:1;font-weight:bold;font-size:14px;letter-spacing:0.3px;color:#0000ff;left:817px;top:127px;font-size:14px;">0.12</div>
<div style="position:absolute;white-space:nowrap;line-height:1;font-weight:bold;font-size:14px;letter-spacing:0.3px;color:#0000ff;left:855px;top:127px;font-size:14px;">nV</div>
<div style="position:absolute;white-space:nowrap;line-height:1;font-weight:bold;font-size:14px;letter-spacing:0.3px;color:#0000ff;left:882px;top:127px;font-size:14px;">RMS=</div>
<div style="position:absolute;white-space:nowrap;line-height:1;font-weight:bold;font-size:14px;letter-spacing:0.3px;color:#0000ff;left:945px;top:127px;font-size:14px;">706.99994278</div>
<div style="position:absolute;white-space:nowrap;line-height:1;font-weight:bold;font-size:14px;letter-spacing:0.3px;color:#0000ff;left:1041px;top:127px;font-size:14px;">mV</div>
<div style="position:absolute;white-space:nowrap;line-height:1;font-weight:bold;font-size:14px;letter-spacing:0.3px;color:#ff0000;left:79px;top:143px;font-size:14px;letter-spacing:0.43px">-No SINC Interpolation</div>
<div style="position:absolute;white-space:nowrap;line-height:1;font-weight:bold;font-size:14px;letter-spacing:0.3px;color:#000;left:13px;top:419px;font-size:14px;">+03:45:06:497</div>
<div style="position:absolute;white-space:nowrap;line-height:1;font-weight:bold;font-size:14px;letter-spacing:0.3px;color:#000;left:643px;top:420px;font-size:14px;letter-spacing:1.35px">WAVEFORM</div>
<div class="a" style="left:743px;top:418px;width:38px;height:16px;background:#000"></div>
<div style="position:absolute;white-space:nowrap;line-height:1;font-weight:bold;font-size:14px;letter-spacing:0.3px;color:#fff;left:745px;top:419px;font-size:14px;">SINC</div>
<div style="position:absolute;white-space:nowrap;line-height:1;font-weight:bold;font-size:14px;letter-spacing:0.3px;color:#000;left:1304px;top:417px;font-size:14px;">s</div>
<svg class="a" style="left:1279px;top:162px" width="19" height="12" shape-rendering="crispEdges"><rect x="0" y="-1" width="19" height="7" fill="#fff"/><rect x="0" y="0" width="5" height="1" fill="#ff00ff"/><rect x="8" y="0" width="6" height="1" fill="#ff00ff"/><rect x="15" y="0" width="4" height="1" fill="#ff00ff"/><rect x="0" y="2" width="6" height="1" fill="#ff00ff"/><rect x="8" y="2" width="6" height="1" fill="#ff00ff"/><rect x="15" y="2" width="4" height="1" fill="#ff00ff"/><rect x="0" y="4" width="6" height="1" fill="#ff00ff"/><rect x="7" y="4" width="7" height="1" fill="#ff00ff"/><rect x="15" y="4" width="4" height="1" fill="#ff00ff"/><rect x="0" y="6" width="3" height="5" fill="#ff00ff"/><path d="M4 6h5l-1 5h-3z" fill="#ff00ff"/><rect x="10" y="6" width="3" height="5" fill="#ff00ff"/><rect x="15" y="6" width="3" height="5" fill="#ff00ff"/></svg>
<svg class="a" style="left:0;top:0" width="1600" height="860" shape-rendering="crispEdges"><line x1="200.5" y1="530" x2="200.5" y2="787" stroke="#00ff00" stroke-dasharray="3 3"/><line x1="322.5" y1="530" x2="322.5" y2="787" stroke="#00ff00" stroke-dasharray="3 3"/><line x1="444.5" y1="530" x2="444.5" y2="787" stroke="#00ff00" stroke-dasharray="3 3"/><line x1="566.5" y1="530" x2="566.5" y2="787" stroke="#00ff00" stroke-dasharray="3 3"/><line x1="688.5" y1="530" x2="688.5" y2="787" stroke="#00ff00" stroke-dasharray="3 3"/><line x1="810.5" y1="530" x2="810.5" y2="787" stroke="#00ff00" stroke-dasharray="3 3"/><line x1="932.5" y1="530" x2="932.5" y2="787" stroke="#00ff00" stroke-dasharray="3 3"/><line x1="1054.5" y1="530" x2="1054.5" y2="787" stroke="#00ff00" stroke-dasharray="3 3"/><line x1="1176.5" y1="530" x2="1176.5" y2="787" stroke="#00ff00" stroke-dasharray="3 3"/><line x1="78" y1="761.5" x2="1298" y2="761.5" stroke="#00ff00" stroke-dasharray="3 3"/><line x1="78" y1="735.5" x2="1298" y2="735.5" stroke="#00ff00" stroke-dasharray="3 3"/><line x1="78" y1="709.5" x2="1298" y2="709.5" stroke="#00ff00" stroke-dasharray="3 3"/><line x1="78" y1="684.5" x2="1298" y2="684.5" stroke="#00ff00" stroke-dasharray="3 3"/><line x1="78" y1="658.5" x2="1298" y2="658.5" stroke="#00ff00" stroke-dasharray="3 3"/><line x1="78" y1="632.5" x2="1298" y2="632.5" stroke="#00ff00" stroke-dasharray="3 3"/><line x1="78" y1="606.5" x2="1298" y2="606.5" stroke="#00ff00" stroke-dasharray="3 3"/><line x1="78" y1="580.5" x2="1298" y2="580.5" stroke="#00ff00" stroke-dasharray="3 3"/><line x1="78" y1="554.5" x2="1298" y2="554.5" stroke="#00ff00" stroke-dasharray="3 3"/><rect x="78.5" y="530.5" width="1220" height="257" fill="none" stroke="#00ff00"/><rect x="688" y="658" width="1" height="129" fill="#0000ff"/><rect x="690" y="658" width="1" height="129" fill="#0000ff"/><rect x="689" y="530" width="1" height="128" fill="#0000ff"/></svg>
<div style="position:absolute;white-space:nowrap;line-height:1;font-weight:bold;font-size:14px;letter-spacing:0.3px;color:#0000ff;right:1526px;top:523px;text-align:right">1</div>
<div style="position:absolute;white-space:nowrap;line-height:1;font-weight:bold;font-size:14px;letter-spacing:0.3px;color:#0000ff;right:1526px;top:547px;text-align:right">0.9</div>
<div style="position:absolute;white-space:nowrap;line-height:1;font-weight:bold;font-size:14px;letter-spacing:0.3px;color:#0000ff;right:1526px;top:573px;text-align:right">0.8</div>
<div style="position:absolute;white-space:nowrap;line-height:1;font-weight:bold;font-size:14px;letter-spacing:0.3px;color:#0000ff;right:1526px;top:599px;text-align:right">0.7</div>
<div style="position:absolute;white-space:nowrap;line-height:1;font-weight:bold;font-size:14px;letter-spacing:0.3px;color:#0000ff;right:1526px;top:625px;text-align:right">0.6</div>
<div style="position:absolute;white-space:nowrap;line-height:1;font-weight:bold;font-size:14px;letter-spacing:0.3px;color:#0000ff;right:1526px;top:651px;text-align:right">0.5</div>
<div style="position:absolute;white-space:nowrap;line-height:1;font-weight:bold;font-size:14px;letter-spacing:0.3px;color:#0000ff;right:1526px;top:677px;text-align:right">0.4</div>
<div style="position:absolute;white-space:nowrap;line-height:1;font-weight:bold;font-size:14px;letter-spacing:0.3px;color:#0000ff;right:1526px;top:702px;text-align:right">0.3</div>
<div style="position:absolute;white-space:nowrap;line-height:1;font-weight:bold;font-size:14px;letter-spacing:0.3px;color:#0000ff;right:1526px;top:728px;text-align:right">0.2</div>
<div style="position:absolute;white-space:nowrap;line-height:1;font-weight:bold;font-size:14px;letter-spacing:0.3px;color:#0000ff;right:1526px;top:754px;text-align:right">0.1</div>
<div style="position:absolute;white-space:nowrap;line-height:1;font-weight:bold;font-size:14px;letter-spacing:0.3px;color:#0000ff;right:1526px;top:780px;text-align:right">0</div>
<div style="position:absolute;white-space:nowrap;line-height:1;font-weight:bold;font-size:14px;letter-spacing:0.3px;color:#000;left:18px;width:120px;top:792px;text-align:center">0</div>
<div style="position:absolute;white-space:nowrap;line-height:1;font-weight:bold;font-size:14px;letter-spacing:0.3px;color:#000;left:140px;width:120px;top:792px;text-align:center">2.4</div>
<div style="position:absolute;white-space:nowrap;line-height:1;font-weight:bold;font-size:14px;letter-spacing:0.3px;color:#000;left:262px;width:120px;top:792px;text-align:center">4.8</div>
<div style="position:absolute;white-space:nowrap;line-height:1;font-weight:bold;font-size:14px;letter-spacing:0.3px;color:#000;left:384px;width:120px;top:792px;text-align:center">7.2</div>
<div style="position:absolute;white-space:nowrap;line-height:1;font-weight:bold;font-size:14px;letter-spacing:0.3px;color:#000;left:506px;width:120px;top:792px;text-align:center">9.6</div>
<div style="position:absolute;white-space:nowrap;line-height:1;font-weight:bold;font-size:14px;letter-spacing:0.3px;color:#000;left:628px;width:120px;top:792px;text-align:center">12</div>
<div style="position:absolute;white-space:nowrap;line-height:1;font-weight:bold;font-size:14px;letter-spacing:0.3px;color:#000;left:750px;width:120px;top:792px;text-align:center">14.4</div>
<div style="position:absolute;white-space:nowrap;line-height:1;font-weight:bold;font-size:14px;letter-spacing:0.3px;color:#000;left:872px;width:120px;top:792px;text-align:center">16.8</div>
<div style="position:absolute;white-space:nowrap;line-height:1;font-weight:bold;font-size:14px;letter-spacing:0.3px;color:#000;left:994px;width:120px;top:792px;text-align:center">19.2</div>
<div style="position:absolute;white-space:nowrap;line-height:1;font-weight:bold;font-size:14px;letter-spacing:0.3px;color:#000;left:1116px;width:120px;top:792px;text-align:center">21.6</div>
<div style="position:absolute;white-space:nowrap;line-height:1;font-weight:bold;font-size:14px;letter-spacing:0.3px;color:#000;left:1238px;width:120px;top:792px;text-align:center">24</div>
<div style="position:absolute;white-space:nowrap;line-height:1;font-weight:bold;font-size:14px;letter-spacing:0.3px;color:#0000ff;left:67px;top:498px;font-size:14px;">A</div>
<div style="position:absolute;white-space:nowrap;line-height:1;font-weight:bold;font-size:14px;letter-spacing:0.3px;color:#0000ff;left:563px;top:498px;font-size:14px;">A: Peak Frequency= 12.000000&nbsp;&nbsp;&nbsp;kHz</div>
<div class="a" style="left:13px;top:805px;width:96px;height:16px;background:#000"></div>
<div style="position:absolute;white-space:nowrap;line-height:1;font-weight:bold;font-size:14px;letter-spacing:0.3px;color:#fff;left:14px;top:806px;font-size:14px;">Zero Padding</div>
<div style="position:absolute;white-space:nowrap;line-height:1;font-weight:bold;font-size:14px;letter-spacing:0.3px;color:#000;left:120px;top:806px;font-size:14px;letter-spacing:0.35px">Resolution: 0.732422Hz, 1Hz (real)</div>
<div style="position:absolute;white-space:nowrap;line-height:1;font-weight:bold;font-size:14px;letter-spacing:0.3px;color:#000;left:547px;top:806px;font-size:14px;letter-spacing:0.78px">NORMALIZED AMPLITUDE SPECTRUM</div>
<div style="position:absolute;white-space:nowrap;line-height:1;font-weight:bold;font-size:14px;letter-spacing:0.3px;color:#000;left:1300px;top:804px;font-size:14px;">kHz</div>
<svg class="a" style="left:1279px;top:533px" width="19" height="12" shape-rendering="crispEdges"><rect x="0" y="-1" width="19" height="7" fill="#fff"/><rect x="0" y="0" width="5" height="1" fill="#ff00ff"/><rect x="8" y="0" width="6" height="1" fill="#ff00ff"/><rect x="15" y="0" width="4" height="1" fill="#ff00ff"/><rect x="0" y="2" width="6" height="1" fill="#ff00ff"/><rect x="8" y="2" width="6" height="1" fill="#ff00ff"/><rect x="15" y="2" width="4" height="1" fill="#ff00ff"/><rect x="0" y="4" width="6" height="1" fill="#ff00ff"/><rect x="7" y="4" width="7" height="1" fill="#ff00ff"/><rect x="15" y="4" width="4" height="1" fill="#ff00ff"/><rect x="0" y="6" width="3" height="5" fill="#ff00ff"/><path d="M4 6h5l-1 5h-3z" fill="#ff00ff"/><rect x="10" y="6" width="3" height="5" fill="#ff00ff"/><rect x="15" y="6" width="3" height="5" fill="#ff00ff"/></svg>
<div class="a" style="left:1354px;top:183px;width:244px;height:558px;background:#f0f0f0;border:1px solid #999;box-shadow:2px 3px 8px rgba(0,0,0,.35)"></div>
<div class="a" style="left:1355px;top:184px;width:241px;height:25px;background:#fff"></div>
<svg class="a" style="left:1358px;top:188px" width="17" height="16"><rect width="17" height="16" fill="#ff0"/><path d="M0 4q2-4 4 0t4 0 4 0 4 0" fill="none" stroke="#f00" stroke-width="1.3"/><path d="M0 10v-3h3v3h4v-3h3v3h4v-3h3" fill="none" stroke="#0c0" stroke-width="1.3"/><path d="M0 15l3-4 3 4 3-4 3 4 3-4 2 3" fill="none" stroke="#00f" stroke-width="1.2"/></svg>
<div style="position:absolute;white-space:nowrap;line-height:1;font-size:11px;letter-spacing:-0.2px;left:1379px;top:191px;color:#8a8a8a;font-size:12px">Signal Gener...</div>
<div class="a" style="left:1478px;top:196px;width:11px;height:1px;background:#999"></div>
<div class="a" style="left:1523px;top:191px;width:10px;height:10px;border:1px solid #ddd"></div>
<svg class="a" style="left:1568px;top:190px" width="12" height="12"><path d="M1 1L11 11M11 1L1 11" stroke="#777" stroke-width="1"/></svg>
<div class="a" style="left:1360px;top:217px;width:13px;height:13px;background:#fff;border-top:1px solid #a0a0a0;border-left:1px solid #a0a0a0;border-right:1px solid #fff;border-bottom:1px solid #fff;box-shadow:inset 1px 1px 0 #696969,inset -1px -1px 0 #e3e3e3"></div>
<svg class="a" style="left:1362px;top:219px" width="9" height="9"><path d="M1 4l2.5 2.5L8 1.5" fill="none" stroke="#000" stroke-width="1.8"/></svg>
<div style="position:absolute;white-space:nowrap;line-height:1;font-size:11px;letter-spacing:-0.2px;left:1378px;top:218px;color:#000;font-size:11px">Show Editor</div>
<div class="a" style="left:1441px;top:214px;width:127px;height:20px;background:#fff;border-top:1px solid #a0a0a0;border-left:1px solid #a0a0a0;border-right:1px solid #fff;border-bottom:1px solid #fff;box-shadow:inset 1px 1px 0 #696969,inset -1px -1px 0 #e3e3e3"><div style="position:absolute;white-space:nowrap;line-height:1;font-size:11px;letter-spacing:-0.2px;left:3px;top:4px;color:#000">iA = oA, iB = oB</div><div class="a" style="right:1px;top:1px;bottom:1px;width:16px;background:#f0f0f0;border-top:1px solid #e3e3e3;border-left:1px solid #e3e3e3;border-right:1px solid #696969;border-bottom:1px solid #696969;box-shadow:inset 1px 1px 0 #fff,inset -1px -1px 0 #a0a0a0"><div class="a" style="left:3px;top:6px;border-left:4px solid transparent;border-right:4px solid transparent;border-top:4px solid #000"></div></div></div>
<div class="a" style="left:1571px;top:212px;width:23px;height:23px;background:#f0f0f0;border-top:1px solid #fff;border-left:1px solid #fff;border-right:1px solid #696969;border-bottom:1px solid #696969;box-shadow:inset -1px -1px 0 #a0a0a0"><svg class="a" style="left:5px;top:5px" width="12" height="12"><path d="M1 1l10 5-10 5z" fill="#f00"/></svg></div>
<div style="position:absolute;white-space:nowrap;line-height:1;font-size:11px;letter-spacing:-0.2px;left:1358px;top:244px;color:#a0a0a0;font-size:11px">Start OSC after (s)</div>
<div class="a" style="left:1450px;top:240px;width:67px;height:19px;background:#f0f0f0;border-top:1px solid #a0a0a0;border-left:1px solid #a0a0a0;border-right:1px solid #fff;border-bottom:1px solid #fff;box-shadow:inset 1px 1px 0 #696969,inset -1px -1px 0 #e3e3e3"><div style="position:absolute;white-space:nowrap;line-height:1;font-size:11px;letter-spacing:-0.2px;left:3px;top:4px;color:#6d6d6d">0</div></div>
<div class="a" style="left:1520px;top:243px;width:13px;height:13px;background:#f0f0f0;border-top:1px solid #a0a0a0;border-left:1px solid #a0a0a0;border-right:1px solid #fff;border-bottom:1px solid #fff;box-shadow:inset 1px 1px 0 #696969,inset -1px -1px 0 #e3e3e3"></div>
<div style="position:absolute;white-space:nowrap;line-height:1;font-size:11px;letter-spacing:-0.2px;left:1538px;top:244px;color:#a0a0a0;font-size:11px">Echo Only</div>
<div class="a" style="left:1357px;top:273px;width:208px;height:35px;border:1px solid #a0a0a0;box-shadow:inset 1px 1px 0 #fff,1px 1px 0 #fff"></div>
<div style="position:absolute;white-space:nowrap;line-height:1;font-size:11px;letter-spacing:-0.2px;left:1364px;top:268px;background:#f0f0f0;padding:0 2px">Sampling Parameters</div>
<div class="a" style="left:1363px;top:283px;width:99px;height:19px;background:#fff;border-top:1px solid #a0a0a0;border-left:1px solid #a0a0a0;border-right:1px solid #fff;border-bottom:1px solid #fff;box-shadow:inset 1px 1px 0 #696969,inset -1px -1px 0 #e3e3e3"><div style="position:absolute;white-space:nowrap;line-height:1;font-size:11px;letter-spacing:-0.2px;left:3px;top:4px;color:#000">48kHz</div><div class="a" style="right:1px;top:1px;bottom:1px;width:16px;background:#f0f0f0;border-top:1px solid #e3e3e3;border-left:1px solid #e3e3e3;border-right:1px solid #696969;border-bottom:1px solid #696969;box-shadow:inset 1px 1px 0 #fff,inset -1px -1px 0 #a0a0a0"><div class="a" style="left:3px;top:6px;border-left:4px solid transparent;border-right:4px solid transparent;border-top:4px solid #000"></div></div></div>
<div class="a" style="left:1465px;top:283px;width:44px;height:19px;background:#fff;border-top:1px solid #a0a0a0;border-left:1px solid #a0a0a0;border-right:1px solid #fff;border-bottom:1px solid #fff;box-shadow:inset 1px 1px 0 #696969,inset -1px -1px 0 #e3e3e3"><div style="position:absolute;white-space:nowrap;line-height:1;font-size:11px;letter-spacing:-0.2px;left:3px;top:4px;color:#000">A</div><div class="a" style="right:1px;top:1px;bottom:1px;width:16px;background:#f0f0f0;border-top:1px solid #e3e3e3;border-left:1px solid #e3e3e3;border-right:1px solid #696969;border-bottom:1px solid #696969;box-shadow:inset 1px 1px 0 #fff,inset -1px -1px 0 #a0a0a0"><div class="a" style="left:3px;top:6px;border-left:4px solid transparent;border-right:4px solid transparent;border-top:4px solid #000"></div></div></div>
<div class="a" style="left:1511px;top:283px;width:51px;height:19px;background:#fff;border-top:1px solid #a0a0a0;border-left:1px solid #a0a0a0;border-right:1px solid #fff;border-bottom:1px solid #fff;box-shadow:inset 1px 1px 0 #696969,inset -1px -1px 0 #e3e3e3"><div style="position:absolute;white-space:nowrap;line-height:1;font-size:11px;letter-spacing:-0.2px;left:3px;top:4px;color:#000">32Bit</div><div class="a" style="right:1px;top:1px;bottom:1px;width:16px;background:#f0f0f0;border-top:1px solid #e3e3e3;border-left:1px solid #e3e3e3;border-right:1px solid #696969;border-bottom:1px solid #696969;box-shadow:inset 1px 1px 0 #fff,inset -1px -1px 0 #a0a0a0"><div class="a" style="left:3px;top:6px;border-left:4px solid transparent;border-right:4px solid transparent;border-top:4px solid #000"></div></div></div>
<div class="a" style="left:1570px;top:266px;width:23px;height:23px;background:#f0f0f0;border-top:1px solid #fff;border-left:1px solid #fff;border-right:1px solid #696969;border-bottom:1px solid #696969;box-shadow:inset -1px -1px 0 #a0a0a0"><svg class="a" style="left:4px;top:4px" width="14" height="14"><rect x=".5" y=".5" width="13" height="13" fill="#808000" stroke="#000"/><rect x="3" y="1" width="7" height="5" fill="#fff"/><rect x="3" y="9" width="8" height="4" fill="#000"/></svg></div>
<div class="a" style="left:1570px;top:290px;width:23px;height:23px;background:#f0f0f0;border-top:1px solid #fff;border-left:1px solid #fff;border-right:1px solid #696969;border-bottom:1px solid #696969;box-shadow:inset -1px -1px 0 #a0a0a0"><svg class="a" style="left:3px;top:3px" width="16" height="16"><path d="M2 5h12M2 8h12M2 11h12" stroke="#d9a0a0"/><path d="M5 13V3l8-2v10" fill="none" stroke="#e06060" stroke-width="1.5"/><ellipse cx="4" cy="13" rx="2" ry="1.5" fill="#e06060"/><ellipse cx="12" cy="11" rx="2" ry="1.5" fill="#e06060"/></svg></div>
<div class="a" style="left:1366px;top:320px;width:84px;height:20px;background:#fff;border-top:1px solid #a0a0a0;border-left:1px solid #a0a0a0;border-right:1px solid #fff;border-bottom:1px solid #fff;box-shadow:inset 1px 1px 0 #696969,inset -1px -1px 0 #e3e3e3"><div style="position:absolute;white-space:nowrap;line-height:1;font-size:11px;letter-spacing:-0.2px;left:3px;top:4px;color:#000">MultiTones</div><div class="a" style="right:1px;top:1px;bottom:1px;width:16px;background:#f0f0f0;border-top:1px solid #e3e3e3;border-left:1px solid #e3e3e3;border-right:1px solid #696969;border-bottom:1px solid #696969;box-shadow:inset 1px 1px 0 #fff,inset -1px -1px 0 #a0a0a0"><div class="a" style="left:3px;top:6px;border-left:4px solid transparent;border-right:4px solid transparent;border-top:4px solid #000"></div></div></div>
<div class="a" style="left:1462px;top:319px;width:25px;height:21px;background:#f0f0f0;border-top:1px solid #fff;border-left:1px solid #fff;border-right:1px solid #696969;border-bottom:1px solid #696969;box-shadow:inset -1px -1px 0 #a0a0a0"><div style="position:absolute;white-space:nowrap;line-height:1;font-size:11px;letter-spacing:-0.2px;left:7px;top:7px">...</div></div>
<div class="a" style="left:1498px;top:320px;width:85px;height:20px;background:#f0f0f0;border-top:1px solid #a0a0a0;border-left:1px solid #a0a0a0;border-right:1px solid #fff;border-bottom:1px solid #fff;box-shadow:inset 1px 1px 0 #696969,inset -1px -1px 0 #e3e3e3"><div style="position:absolute;white-space:nowrap;line-height:1;font-size:11px;letter-spacing:-0.2px;left:3px;top:4px;color:#6d6d6d">MultiTones</div><div class="a" style="right:1px;top:1px;bottom:1px;width:16px;background:#f0f0f0;border-top:1px solid #e3e3e3;border-left:1px solid #e3e3e3;border-right:1px solid #696969;border-bottom:1px solid #696969;box-shadow:inset 1px 1px 0 #fff,inset -1px -1px 0 #a0a0a0"><div class="a" style="left:3px;top:6px;border-left:4px solid transparent;border-right:4px solid transparent;border-top:4px solid #a0a0a0"></div></div></div>
<div class="a" style="left:1364px;top:384px;width:3px;height:131px;background:#a0a0a0;border-left:1px solid #888;border-right:1px solid #fff"></div>
<div class="a" style="left:1360px;top:508px;width:11px;height:5px;background:#f0f0f0;border:1px solid #696969;border-top-color:#fff;border-left-color:#fff"></div>
<div class="a" style="left:1379px;top:384px;width:3px;height:131px;background:#a0a0a0;border-left:1px solid #888;border-right:1px solid #fff"></div>
<div class="a" style="left:1375px;top:421px;width:11px;height:5px;background:#f0f0f0;border:1px solid #696969;border-top-color:#fff;border-left-color:#fff"></div>
<div class="a" style="left:1573px;top:384px;width:3px;height:131px;background:#a0a0a0;border-left:1px solid #888;border-right:1px solid #fff"></div>
<div class="a" style="left:1569px;top:384px;width:11px;height:5px;background:#f0f0f0;border:1px solid #696969;border-top-color:#fff;border-left-color:#fff"></div>
<div class="a" style="left:1585px;top:384px;width:3px;height:131px;background:#a0a0a0;border-left:1px solid #888;border-right:1px solid #fff"></div>
<div class="a" style="left:1581px;top:508px;width:11px;height:5px;background:#f0f0f0;border:1px solid #696969;border-top-color:#fff;border-left-color:#fff"></div>
<div style="position:absolute;white-space:nowrap;line-height:1;font-size:11px;letter-spacing:-0.2px;left:1421px;top:376px;color:#000;font-size:11px">Output Frequency (Hz)</div>
<div class="a" style="left:1390px;top:394px;width:87px;height:19px;background:#f0f0f0;border-top:1px solid #a0a0a0;border-left:1px solid #a0a0a0;border-right:1px solid #fff;border-bottom:1px solid #fff;box-shadow:inset 1px 1px 0 #696969,inset -1px -1px 0 #e3e3e3"><div style="position:absolute;white-space:nowrap;line-height:1;font-size:11px;letter-spacing:-0.2px;left:3px;top:4px;color:#6d6d6d">1000</div><div class="a" style="right:1px;top:1px;bottom:1px;width:16px;background:#f0f0f0;border-top:1px solid #e3e3e3;border-left:1px solid #e3e3e3;border-right:1px solid #696969;border-bottom:1px solid #696969;box-shadow:inset 1px 1px 0 #fff,inset -1px -1px 0 #a0a0a0"><div class="a" style="left:3px;top:6px;border-left:4px solid transparent;border-right:4px solid transparent;border-top:4px solid #a0a0a0"></div></div></div>
<div class="a" style="left:1479px;top:394px;width:86px;height:19px;background:#f0f0f0;border-top:1px solid #a0a0a0;border-left:1px solid #a0a0a0;border-right:1px solid #fff;border-bottom:1px solid #fff;box-shadow:inset 1px 1px 0 #696969,inset -1px -1px 0 #e3e3e3"><div style="position:absolute;white-space:nowrap;line-height:1;font-size:11px;letter-spacing:-0.2px;left:3px;top:4px;color:#6d6d6d">1000</div><div class="a" style="right:1px;top:1px;bottom:1px;width:16px;background:#f0f0f0;border-top:1px solid #e3e3e3;border-left:1px solid #e3e3e3;border-right:1px solid #696969;border-bottom:1px solid #696969;box-shadow:inset 1px 1px 0 #fff,inset -1px -1px 0 #a0a0a0"><div class="a" style="left:3px;top:6px;border-left:4px solid transparent;border-right:4px solid transparent;border-top:4px solid #a0a0a0"></div></div></div>
<div style="position:absolute;white-space:nowrap;line-height:1;font-size:11px;letter-spacing:-0.2px;left:1423px;top:425px;color:#000;font-size:11px">Output Amplitude(Vp)</div>
<div class="a" style="left:1390px;top:446px;width:87px;height:19px;background:#fff;border-top:1px solid #a0a0a0;border-left:1px solid #a0a0a0;border-right:1px solid #fff;border-bottom:1px solid #fff;box-shadow:inset 1px 1px 0 #696969,inset -1px -1px 0 #e3e3e3"><div style="position:absolute;white-space:nowrap;line-height:1;font-size:11px;letter-spacing:-0.2px;left:3px;top:4px;color:#000">0.707</div><div class="a" style="right:1px;top:1px;bottom:1px;width:16px;background:#f0f0f0;border-top:1px solid #e3e3e3;border-left:1px solid #e3e3e3;border-right:1px solid #696969;border-bottom:1px solid #696969;box-shadow:inset 1px 1px 0 #fff,inset -1px -1px 0 #a0a0a0"><div class="a" style="left:3px;top:6px;border-left:4px solid transparent;border-right:4px solid transparent;border-top:4px solid #000"></div></div></div>
<div class="a" style="left:1479px;top:446px;width:86px;height:19px;background:#f0f0f0;border-top:1px solid #a0a0a0;border-left:1px solid #a0a0a0;border-right:1px solid #fff;border-bottom:1px solid #fff;box-shadow:inset 1px 1px 0 #696969,inset -1px -1px 0 #e3e3e3"><div style="position:absolute;white-space:nowrap;line-height:1;font-size:11px;letter-spacing:-0.2px;left:3px;top:4px;color:#6d6d6d">1</div><div class="a" style="right:1px;top:1px;bottom:1px;width:16px;background:#f0f0f0;border-top:1px solid #e3e3e3;border-left:1px solid #e3e3e3;border-right:1px solid #696969;border-bottom:1px solid #696969;box-shadow:inset 1px 1px 0 #fff,inset -1px -1px 0 #a0a0a0"><div class="a" style="left:3px;top:6px;border-left:4px solid transparent;border-right:4px solid transparent;border-top:4px solid #a0a0a0"></div></div></div>
<div style="position:absolute;white-space:nowrap;line-height:1;font-size:11px;letter-spacing:-0.2px;left:1394px;top:477px;color:#a0a0a0;font-size:11px">Output Phase Difference (Degree)</div>
<div class="a" style="left:1438px;top:497px;width:73px;height:19px;background:#f0f0f0;border-top:1px solid #a0a0a0;border-left:1px solid #a0a0a0;border-right:1px solid #fff;border-bottom:1px solid #fff;box-shadow:inset 1px 1px 0 #696969,inset -1px -1px 0 #e3e3e3"><div style="position:absolute;white-space:nowrap;line-height:1;font-size:11px;letter-spacing:-0.2px;left:3px;top:4px;color:#6d6d6d">0</div><div class="a" style="right:1px;top:1px;bottom:1px;width:16px;background:#f0f0f0;border-top:1px solid #e3e3e3;border-left:1px solid #e3e3e3;border-right:1px solid #696969;border-bottom:1px solid #696969;box-shadow:inset 1px 1px 0 #fff,inset -1px -1px 0 #a0a0a0"><div class="a" style="left:3px;top:6px;border-left:4px solid transparent;border-right:4px solid transparent;border-top:4px solid #a0a0a0"></div></div></div>
<div style="position:absolute;white-space:nowrap;line-height:1;font-size:11px;letter-spacing:-0.2px;left:1358px;top:522px;color:#000;font-size:11px">-3.0dBFS</div>
<div class="a" style="left:1413px;top:526px;width:120px;height:3px;background:#a0a0a0;border-top:1px solid #888;border-bottom:1px solid #fff"></div>
<div class="a" style="left:1472px;top:522px;width:5px;height:10px;background:#f0f0f0;border:1px solid #888;border-top-color:#fff;border-left-color:#fff"></div>
<div style="position:absolute;white-space:nowrap;line-height:1;font-size:11px;letter-spacing:-0.2px;left:1547px;top:522px;color:#a0a0a0;font-size:11px">0.0dBFS</div>
<div class="a" style="left:1357px;top:540px;width:238px;height:47px;border:1px solid #a0a0a0;box-shadow:inset 1px 1px 0 #fff,1px 1px 0 #fff"></div>
<div class="a" style="left:1364px;top:546px;width:13px;height:13px;background:#fff;border-top:1px solid #a0a0a0;border-left:1px solid #a0a0a0;border-right:1px solid #fff;border-bottom:1px solid #fff;box-shadow:inset 1px 1px 0 #696969,inset -1px -1px 0 #e3e3e3"></div>
<div style="position:absolute;white-space:nowrap;line-height:1;font-size:11px;letter-spacing:-0.2px;left:1383px;top:547px;color:#000;font-size:11px">Mask</div>
<div class="a" style="left:1427px;top:545px;width:15px;height:14px;background:#f0f0f0;border-top:1px solid #fff;border-left:1px solid #fff;border-right:1px solid #696969;border-bottom:1px solid #696969;box-shadow:inset -1px -1px 0 #a0a0a0"><div style="position:absolute;white-space:nowrap;line-height:1;font-size:11px;letter-spacing:-0.2px;left:3px;top:3px;font-size:9px">...</div></div>
<div style="position:absolute;white-space:nowrap;line-height:1;font-size:11px;letter-spacing:-0.2px;left:1463px;top:548px;color:#a0a0a0;font-size:11px">On (s)</div>
<div style="position:absolute;white-space:nowrap;line-height:1;font-size:11px;letter-spacing:-0.2px;left:1538px;top:548px;color:#a0a0a0;font-size:11px">Off (s)</div>
<div class="a" style="left:1364px;top:566px;width:13px;height:13px;background:#f0f0f0;border-top:1px solid #a0a0a0;border-left:1px solid #a0a0a0;border-right:1px solid #fff;border-bottom:1px solid #fff;box-shadow:inset 1px 1px 0 #696969,inset -1px -1px 0 #e3e3e3"></div>
<svg class="a" style="left:1366px;top:568px" width="9" height="9"><path d="M1 4l2.5 2.5L8 1.5" fill="none" stroke="#a0a0a0" stroke-width="1.8"/></svg>
<div style="position:absolute;white-space:nowrap;line-height:1;font-size:11px;letter-spacing:-0.2px;left:1382px;top:567px;color:#a0a0a0;font-size:11px">Phase Lock</div>
<div class="a" style="left:1450px;top:564px;width:66px;height:20px;background:#f0f0f0;border-top:1px solid #a0a0a0;border-left:1px solid #a0a0a0;border-right:1px solid #fff;border-bottom:1px solid #fff;box-shadow:inset 1px 1px 0 #696969,inset -1px -1px 0 #e3e3e3"><div style="position:absolute;white-space:nowrap;line-height:1;font-size:11px;letter-spacing:-0.2px;left:3px;top:4px;color:#6d6d6d">1</div></div>
<div class="a" style="left:1523px;top:564px;width:66px;height:20px;background:#f0f0f0;border-top:1px solid #a0a0a0;border-left:1px solid #a0a0a0;border-right:1px solid #fff;border-bottom:1px solid #fff;box-shadow:inset 1px 1px 0 #696969,inset -1px -1px 0 #e3e3e3"><div style="position:absolute;white-space:nowrap;line-height:1;font-size:11px;letter-spacing:-0.2px;left:3px;top:4px;color:#6d6d6d">0</div></div>
<div class="a" style="left:1357px;top:592px;width:238px;height:45px;border:1px solid #a0a0a0;box-shadow:inset 1px 1px 0 #fff,1px 1px 0 #fff"></div>
<div class="a" style="left:1364px;top:607px;width:13px;height:13px;background:#fff;border-top:1px solid #a0a0a0;border-left:1px solid #a0a0a0;border-right:1px solid #fff;border-bottom:1px solid #fff;box-shadow:inset 1px 1px 0 #696969,inset -1px -1px 0 #e3e3e3"></div>
<div style="position:absolute;white-space:nowrap;line-height:1;font-size:11px;letter-spacing:-0.2px;left:1383px;top:608px;color:#000;font-size:11px">Fade</div>
<div style="position:absolute;white-space:nowrap;line-height:1;font-size:11px;letter-spacing:-0.2px;left:1463px;top:598px;color:#a0a0a0;font-size:11px">In (s)</div>
<div style="position:absolute;white-space:nowrap;line-height:1;font-size:11px;letter-spacing:-0.2px;left:1538px;top:598px;color:#a0a0a0;font-size:11px">Out (s)</div>
<div class="a" style="left:1450px;top:614px;width:66px;height:20px;background:#f0f0f0;border-top:1px solid #a0a0a0;border-left:1px solid #a0a0a0;border-right:1px solid #fff;border-bottom:1px solid #fff;box-shadow:inset 1px 1px 0 #696969,inset -1px -1px 0 #e3e3e3"><div style="position:absolute;white-space:nowrap;line-height:1;font-size:11px;letter-spacing:-0.2px;left:3px;top:4px;color:#6d6d6d">0.01</div></div>
<div class="a" style="left:1523px;top:614px;width:66px;height:20px;background:#f0f0f0;border-top:1px solid #a0a0a0;border-left:1px solid #a0a0a0;border-right:1px solid #fff;border-bottom:1px solid #fff;box-shadow:inset 1px 1px 0 #696969,inset -1px -1px 0 #e3e3e3"><div style="position:absolute;white-space:nowrap;line-height:1;font-size:11px;letter-spacing:-0.2px;left:3px;top:4px;color:#6d6d6d">0.01</div></div>
<div class="a" style="left:1357px;top:643px;width:238px;height:47px;border:1px solid #a0a0a0;box-shadow:inset 1px 1px 0 #fff,1px 1px 0 #fff"></div>
<div style="position:absolute;white-space:nowrap;line-height:1;font-size:11px;letter-spacing:-0.2px;left:1360px;top:647px;color:#000;font-size:11px">Modulation</div>
<div style="position:absolute;white-space:nowrap;line-height:1;font-size:11px;letter-spacing:-0.2px;left:1433px;top:647px;color:#a0a0a0;font-size:11px">Carrier (Hz)</div>
<div style="position:absolute;white-space:nowrap;line-height:1;font-size:11px;letter-spacing:-0.2px;left:1508px;top:647px;color:#a0a0a0;font-size:11px">Mod. Index (%)</div>
<div class="a" style="left:1360px;top:664px;width:58px;height:21px;background:#fff;border-top:1px solid #a0a0a0;border-left:1px solid #a0a0a0;border-right:1px solid #fff;border-bottom:1px solid #fff;box-shadow:inset 1px 1px 0 #696969,inset -1px -1px 0 #e3e3e3"><div style="position:absolute;white-space:nowrap;line-height:1;font-size:11px;letter-spacing:-0.2px;left:3px;top:4px;color:#000">NIL</div><div class="a" style="right:1px;top:1px;bottom:1px;width:16px;background:#f0f0f0;border-top:1px solid #e3e3e3;border-left:1px solid #e3e3e3;border-right:1px solid #696969;border-bottom:1px solid #696969;box-shadow:inset 1px 1px 0 #fff,inset -1px -1px 0 #a0a0a0"><div class="a" style="left:3px;top:6px;border-left:4px solid transparent;border-right:4px solid transparent;border-top:4px solid #000"></div></div></div>
<div class="a" style="left:1433px;top:665px;width:66px;height:20px;background:#f0f0f0;border-top:1px solid #a0a0a0;border-left:1px solid #a0a0a0;border-right:1px solid #fff;border-bottom:1px solid #fff;box-shadow:inset 1px 1px 0 #696969,inset -1px -1px 0 #e3e3e3"><div style="position:absolute;white-space:nowrap;line-height:1;font-size:11px;letter-spacing:-0.2px;left:3px;top:4px;color:#6d6d6d">0</div></div>
<div class="a" style="left:1514px;top:665px;width:66px;height:20px;background:#f0f0f0;border-top:1px solid #a0a0a0;border-left:1px solid #a0a0a0;border-right:1px solid #fff;border-bottom:1px solid #fff;box-shadow:inset 1px 1px 0 #696969,inset -1px -1px 0 #e3e3e3"><div style="position:absolute;white-space:nowrap;line-height:1;font-size:11px;letter-spacing:-0.2px;left:3px;top:4px;color:#6d6d6d">0</div></div>
<div style="position:absolute;white-space:nowrap;line-height:1;font-size:11px;letter-spacing:-0.2px;left:1357px;top:698px;color:#000;font-size:11px">Duration (s)</div>
<div class="a" style="left:1421px;top:695px;width:66px;height:20px;background:#f0f0f0;border-top:1px solid #a0a0a0;border-left:1px solid #a0a0a0;border-right:1px solid #fff;border-bottom:1px solid #fff;box-shadow:inset 1px 1px 0 #696969,inset -1px -1px 0 #e3e3e3"><div style="position:absolute;white-space:nowrap;line-height:1;font-size:11px;letter-spacing:-0.2px;left:3px;top:4px;color:#6d6d6d">1</div></div>
<div class="a" style="left:1493px;top:698px;width:13px;height:13px;background:#fff;border-top:1px solid #a0a0a0;border-left:1px solid #a0a0a0;border-right:1px solid #fff;border-bottom:1px solid #fff;box-shadow:inset 1px 1px 0 #696969,inset -1px -1px 0 #e3e3e3"></div>
<svg class="a" style="left:1495px;top:700px" width="9" height="9"><path d="M1 4l2.5 2.5L8 1.5" fill="none" stroke="#000" stroke-width="1.8"/></svg>
<div style="position:absolute;white-space:nowrap;line-height:1;font-size:11px;letter-spacing:-0.2px;left:1511px;top:699px;color:#000;font-size:11px">Loop</div>
<div class="a" style="left:1549px;top:698px;width:13px;height:13px;background:#f0f0f0;border-top:1px solid #a0a0a0;border-left:1px solid #a0a0a0;border-right:1px solid #fff;border-bottom:1px solid #fff;box-shadow:inset 1px 1px 0 #696969,inset -1px -1px 0 #e3e3e3"></div>
<div style="position:absolute;white-space:nowrap;line-height:1;font-size:11px;letter-spacing:-0.2px;left:1567px;top:699px;color:#a0a0a0;font-size:11px">DDS</div>
<div class="a" style="left:1357px;top:722px;width:13px;height:13px;background:#fff;border-top:1px solid #a0a0a0;border-left:1px solid #a0a0a0;border-right:1px solid #fff;border-bottom:1px solid #fff;box-shadow:inset 1px 1px 0 #696969,inset -1px -1px 0 #e3e3e3"></div>
<div style="position:absolute;white-space:nowrap;line-height:1;font-size:11px;letter-spacing:-0.2px;left:1375px;top:723px;color:#000;font-size:11px">Sweep</div>
<div class="a" style="left:1434px;top:723px;width:12px;height:12px;border-radius:50%;border:1px solid #bbb;background:#f0f0f0"></div>
<div style="position:absolute;white-space:nowrap;line-height:1;font-size:11px;letter-spacing:-0.2px;left:1451px;top:723px;color:#a0a0a0;font-size:11px">Frequency</div>
<div class="a" style="left:1515px;top:723px;width:12px;height:12px;border-radius:50%;border:1px solid #bbb;background:#f0f0f0"><div class="a" style="left:3px;top:3px;width:4px;height:4px;border-radius:50%;background:#a0a0a0"></div></div>
<div style="position:absolute;white-space:nowrap;line-height:1;font-size:11px;letter-spacing:-0.2px;left:1531px;top:723px;color:#a0a0a0;font-size:11px">Amplitude</div>
<div class="a" style="left:0;top:836px;width:1600px;height:24px;background:#f0f0f0;border-top:1px solid #fff"></div>
<div class="a" style="left:4px;top:838px;width:1px;height:20px;background:#a0a0a0"></div>
<div class="lbl" style="left:18px;top:842px">F</div>
<div class="cb" style="left:31px;top:838px;width:125px;height:22px;"><div class="v" style="font-size:14px">Auto</div><div class="btn"></div></div>
<div class="cb" style="left:159px;top:838px;width:97px;height:22px;"><div class="v" style="font-size:14px">&times;1</div><div class="btn"></div></div>
<div class="lbl" style="left:262px;top:842px;color:#0000ff">A</div>
<div class="cb" style="left:277px;top:838px;width:125px;height:22px;"><div class="v" style="color:#0000ff;font-size:14px">1</div><div class="btn"></div></div>
<div class="cb" style="left:405px;top:838px;width:90px;height:22px;"><div class="v" style="color:#0000ff;font-size:14px">Off</div><div class="btn"></div></div>
<div class="lbl" style="left:502px;top:842px">M</div>
<div class="cb" style="left:518px;top:838px;width:255px;height:22px;"><div class="v" style="font-size:14px">Amplitude Spectrum</div><div class="btn"></div></div>
<div class="lbl" style="left:778px;top:842px;color:#ff0000">B</div>
<div class="cb dis" style="left:794px;top:838px;width:124px;height:22px;"><div class="v" style="font-size:14px">Off</div><div class="btn"></div></div>
<div class="cb dis" style="left:921px;top:838px;width:91px;height:22px;"><div class="v" style="font-size:14px">Off</div><div class="btn"></div></div>
<div class="lbl" style="left:1020px;top:842px">FFT</div>
<div class="cb" style="left:1052px;top:838px;width:131px;height:22px;"><div class="v" style="font-size:14px">65536</div><div class="btn"></div></div>
<div class="lbl" style="left:1196px;top:842px">WND</div>
<div class="cb" style="left:1246px;top:838px;width:225px;height:22px;"><div class="v" style="font-size:14px">Hann</div><div class="btn"></div></div>
<div class="cb dis" style="left:1474px;top:838px;width:123px;height:22px;"><div class="v" style="font-size:14px">0%</div><div class="btn"></div></div></body></html>
